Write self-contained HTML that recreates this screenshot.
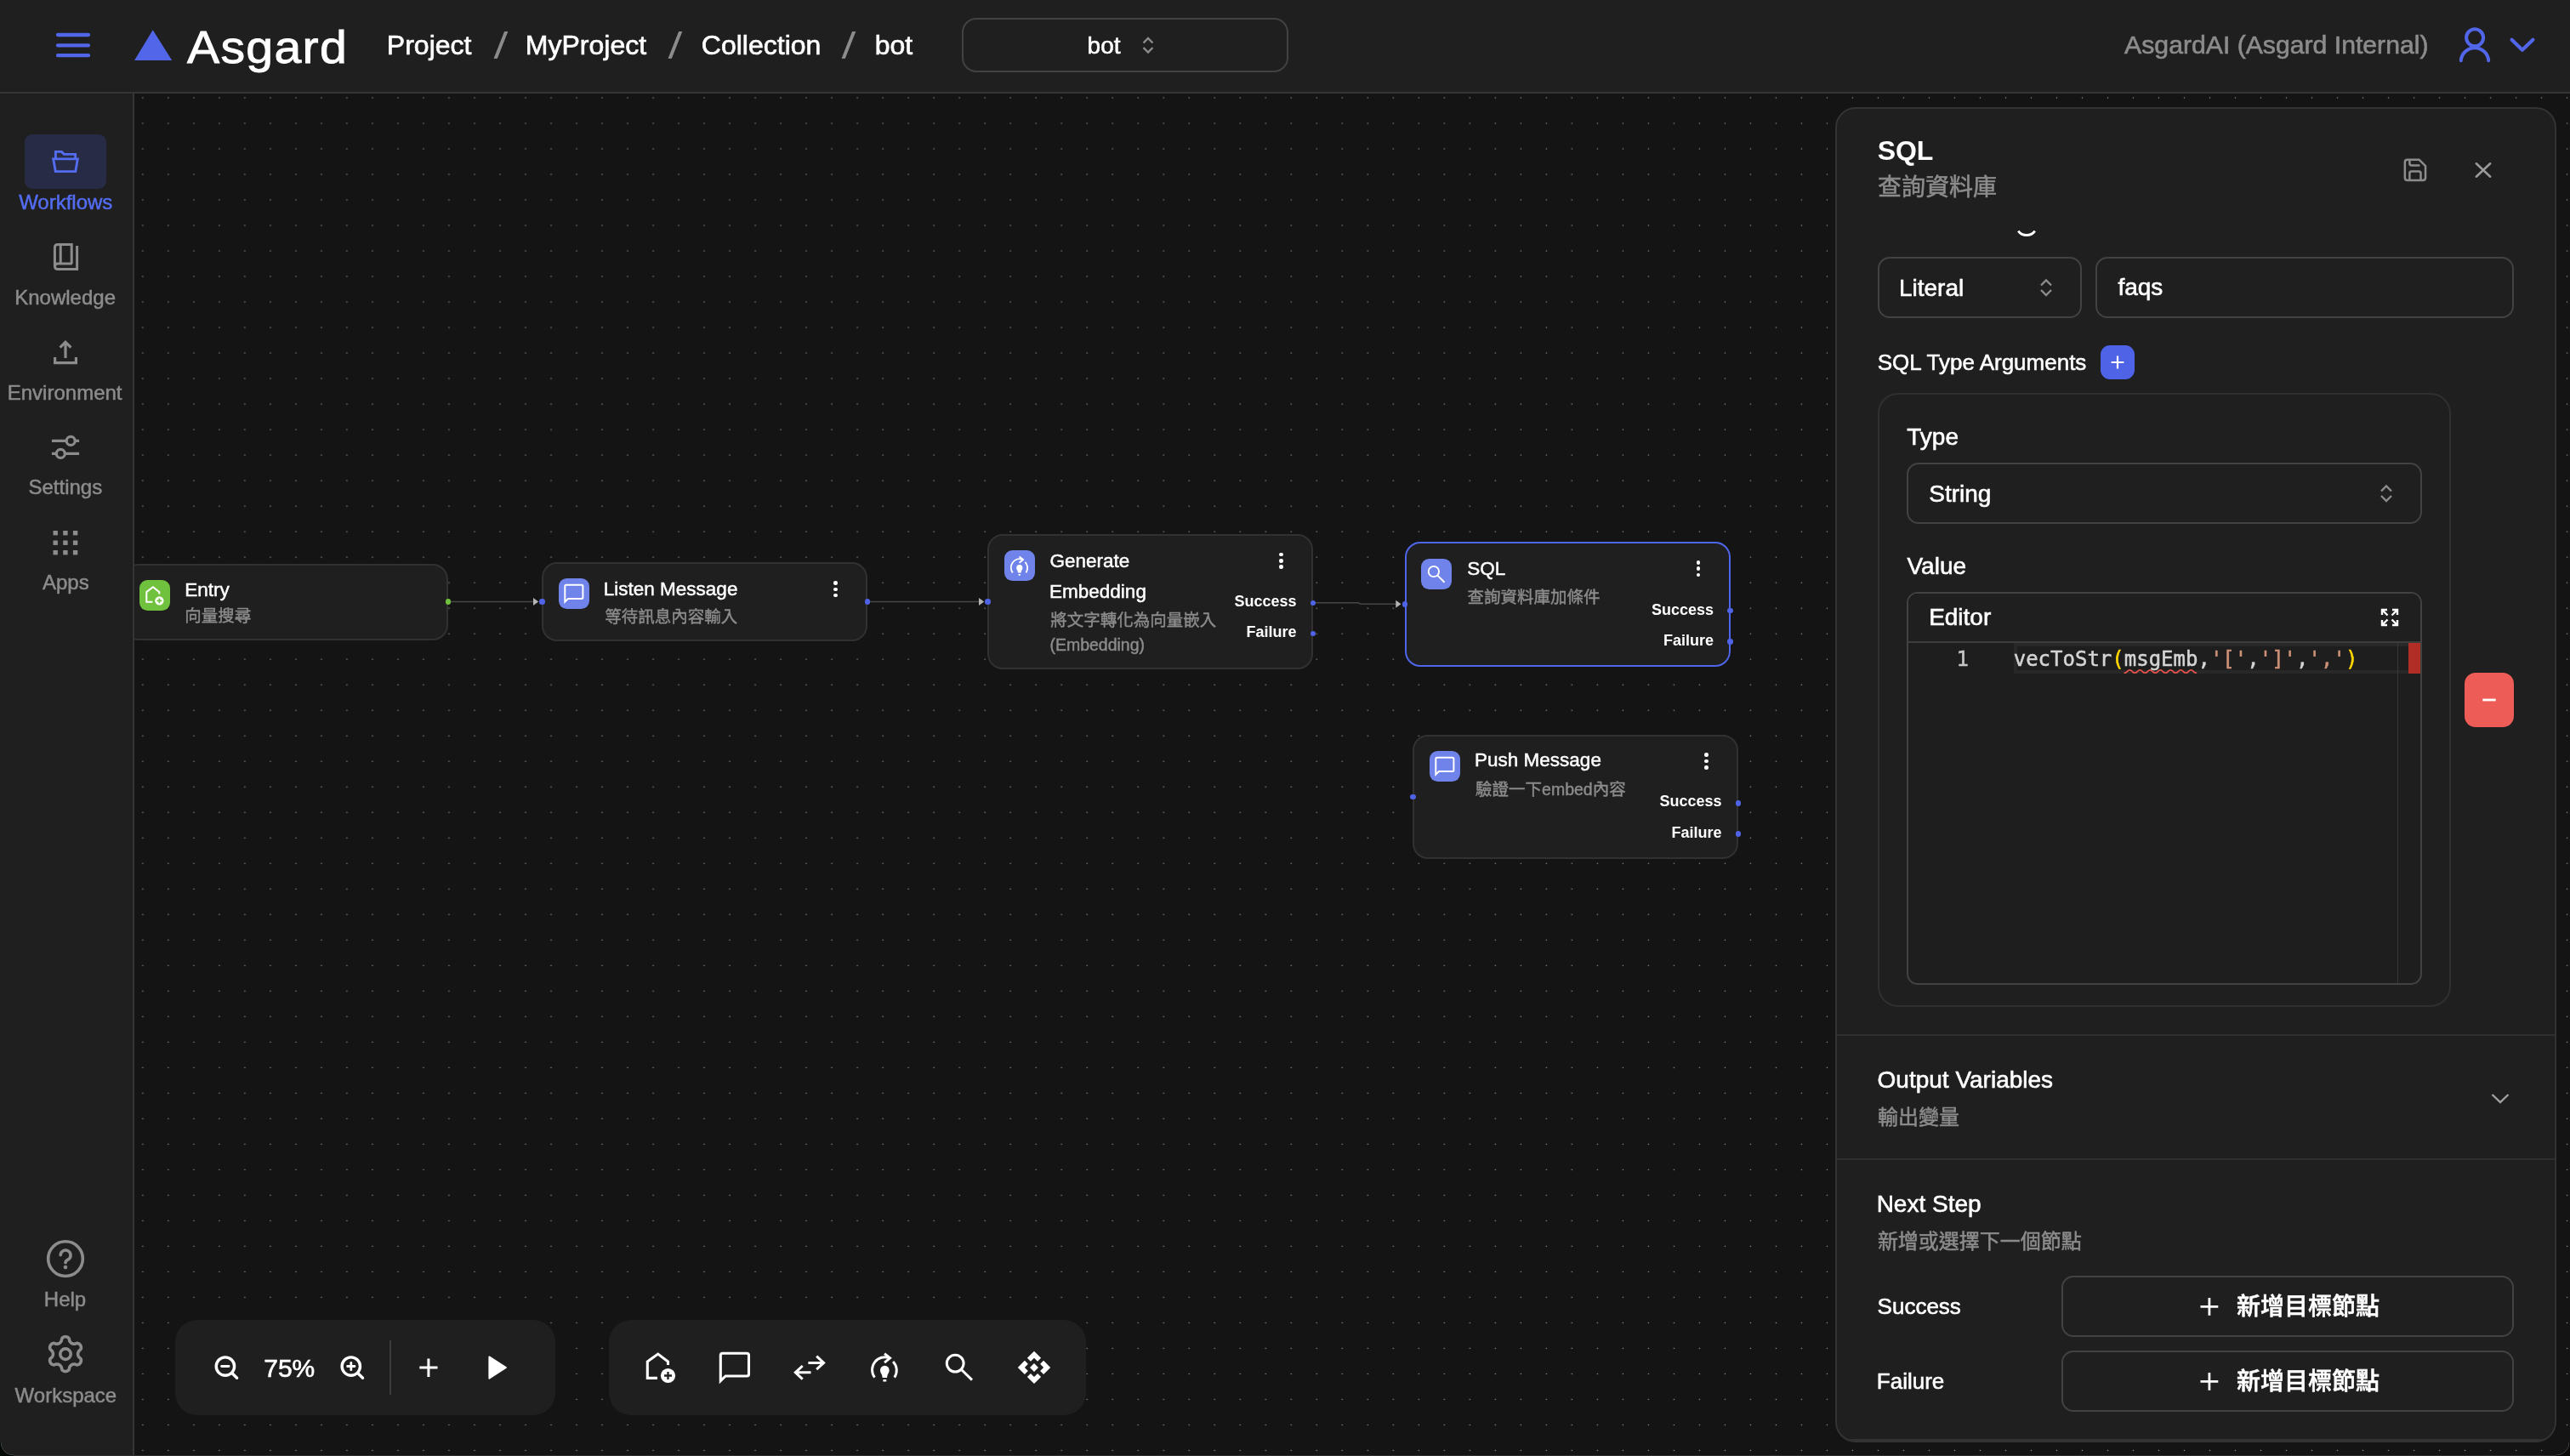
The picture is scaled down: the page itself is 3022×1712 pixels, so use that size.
<!DOCTYPE html>
<html lang="zh-Hant"><head><meta charset="utf-8"><title>Asgard</title>
<style>
html,body{margin:0;padding:0;background:#141414;}
body{width:3022px;height:1712px;overflow:hidden;position:relative;font-family:"Liberation Sans","Noto Sans CJK TC",sans-serif;}
.a{position:absolute;box-sizing:border-box;}
.t{position:absolute;white-space:pre;line-height:1.2;-webkit-text-stroke:0.021em;}
.t b{font-weight:400;}
.t b.g{color:#ffd700;}
.t b.s{color:#ce9178;}
svg{position:absolute;overflow:visible;}
.node{position:absolute;box-sizing:border-box;background:#1f1f1f;border:2px solid #313131;border-radius:18px;}
.ic{position:absolute;width:36px;height:36px;border-radius:9.5px;background:#6f83ea;}
.dot{position:absolute;width:6.5px;height:6.5px;margin:0.5px;border-radius:50%;background:#4f63e6;}
.box{position:absolute;box-sizing:border-box;border:2px solid #424242;border-radius:14px;}
.kd{position:absolute;width:4.6px;height:4.6px;border-radius:50%;background:#fff;}
@media (max-width:1600px){html{zoom:0.5;}}
</style></head>
<body>
<!-- ===== canvas ===== -->
<div class="a" id="canvas" style="left:158px;top:110px;width:2864px;height:1602px;background:#141414;"></div>
<svg style="left:158px;top:110px" width="2864" height="1602" viewBox="0 0 2864 1602"><defs><pattern id="dots" x="-5.12" y="-10" width="30.008" height="30.008" patternUnits="userSpaceOnUse"><circle cx="15.004" cy="15.004" r="0.78" fill="#91919a"/></pattern></defs><rect x="0" y="0" width="2864" height="1602" fill="url(#dots)"/></svg>

<!-- edges -->
<svg style="left:0;top:0" width="3022" height="1712" viewBox="0 0 3022 1712">
  <g fill="none" stroke="#464646" stroke-width="1.5">
    <path d="M530 707.5H628"/>
    <path d="M1023 707.5H1152"/>
    <path d="M1547 708.75H1596Q1598 708.75 1598.5 709.5Q1599 710.25 1601 710.25H1642"/>
  </g>
  <g fill="#b4b4b4">
    <path d="M627 703L633.2 707.5L627 712Z"/>
    <path d="M1151 703L1157.2 707.5L1151 712Z"/>
    <path d="M1641.3 705.75L1647.5 710.25L1641.3 714.75Z"/>
  </g>
</svg>

<!-- Entry node -->
<div class="node" style="left:145px;top:663px;width:382px;height:89.5px;"></div>
<div class="ic" style="left:163.7px;top:682.1px;background:#70c23e;">
  <svg width="36" height="36" viewBox="0 0 36 36"><path d="M15.4 25.8H8.3V14.1L15.9 8.3L23.3 14.1V16.6" fill="none" stroke="#fff" stroke-width="2"/><circle cx="23.4" cy="24.3" r="5.15" fill="#fff"/><path d="M20.5 24.3H26.3M23.4 21.4V27.2" stroke="#70c23e" stroke-width="1.7" fill="none"/></svg>
</div>
<div class="dot" style="left:523.25px;top:703.75px;background:#70c23e;"></div>

<!-- Listen Message node -->
<div class="node" style="left:637px;top:661px;width:383px;height:93px;"></div>
<div class="ic" style="left:657px;top:680px;">
  <svg width="36" height="36" viewBox="0 0 36 36"><path d="M8.8 7.8H26.9Q28.4 7.8 28.4 9.3V22.6Q28.4 24.1 26.9 24.1H11L7.3 27.7V9.3Q7.3 7.8 8.8 7.8Z" fill="none" stroke="#fff" stroke-width="2" stroke-linejoin="miter"/></svg>
</div>
<div class="kd" style="left:980.2px;top:683.45px"></div><div class="kd" style="left:980.2px;top:690.7px"></div><div class="kd" style="left:980.2px;top:697.7px"></div>
<div class="dot" style="left:633.75px;top:703.75px;"></div>
<div class="dot" style="left:1016.25px;top:703.75px;"></div>

<!-- Generate Embedding node -->
<div class="node" style="left:1161px;top:628px;width:383px;height:159px;"></div>
<div class="ic" style="left:1180.8px;top:647.1px;">
  <svg width="36" height="36" viewBox="0 0 36 36"><g fill="none" stroke="#fff" stroke-width="1.9"><path d="M9.8 26.4A10.1 10.1 0 0 1 21.6 11"/><path d="M17.6 7.6L22 11.1L17.6 14.7"/><path d="M24.4 13.8A10.1 10.1 0 0 1 25.5 26.4"/></g><path d="M17.8 17.1a3.6 3.6 0 0 1 3.6 3.6c0 1.7-.9 2.5-1.4 3.7L19.6 26.6H16L15.6 24.4c-.5-1.2-1.4-2-1.4-3.7a3.6 3.6 0 0 1 3.6-3.6Z" fill="#fff"/><rect x="16.6" y="28" width="2.4" height="1.7" fill="#fff"/></svg>
</div>
<div class="kd" style="left:1503.95px;top:649.7px"></div><div class="kd" style="left:1503.95px;top:657.2px"></div><div class="kd" style="left:1503.95px;top:664.45px"></div>
<div class="dot" style="left:1157.5px;top:703.75px;"></div>
<div class="dot" style="left:1540px;top:705px;"></div>
<div class="dot" style="left:1540px;top:741.25px;"></div>

<!-- SQL node -->
<div class="node" style="left:1652px;top:637px;width:382.5px;height:147px;border:2px solid #4f66ea;"></div>
<div class="ic" style="left:1671.3px;top:656.5px;">
  <svg width="36" height="36" viewBox="0 0 36 36"><circle cx="14.9" cy="15" r="6.15" fill="none" stroke="#fff" stroke-width="1.9"/><path d="M19.4 19.6L27.6 27.8" stroke="#fff" stroke-width="2" fill="none"/></svg>
</div>
<div class="kd" style="left:1994.7px;top:658.95px"></div><div class="kd" style="left:1994.7px;top:666.45px"></div><div class="kd" style="left:1994.7px;top:673.7px"></div>
<div class="dot" style="left:1648.25px;top:706.5px;"></div>
<div class="dot" style="left:2030.5px;top:714.25px;"></div>
<div class="dot" style="left:2030.5px;top:750.5px;"></div>

<!-- Push Message node -->
<div class="node" style="left:1661px;top:863.5px;width:383px;height:146.5px;"></div>
<div class="ic" style="left:1680.75px;top:882.5px;">
  <svg width="36" height="36" viewBox="0 0 36 36"><path d="M8.8 7.8H26.9Q28.4 7.8 28.4 9.3V22.6Q28.4 24.1 26.9 24.1H11L7.3 27.7V9.3Q7.3 7.8 8.8 7.8Z" fill="none" stroke="#fff" stroke-width="2" stroke-linejoin="miter"/></svg>
</div>
<div class="kd" style="left:2003.95px;top:885.2px"></div><div class="kd" style="left:2003.95px;top:892.7px"></div><div class="kd" style="left:2003.95px;top:900.2px"></div>
<div class="dot" style="left:1657.5px;top:933px;"></div>
<div class="dot" style="left:2040px;top:940.5px;"></div>
<div class="dot" style="left:2040px;top:976.75px;"></div>

<!-- toolbars -->
<div class="a" style="left:206px;top:1552px;width:446.5px;height:112px;background:#1f1f1f;border-radius:26px;"></div>
<div class="a" style="left:716px;top:1552px;width:561px;height:112px;background:#1f1f1f;border-radius:26px;"></div>
<div class="a" style="left:457.8px;top:1576px;width:2px;height:64px;background:#3c3c3c;"></div>
<svg style="left:0;top:0" width="3022" height="1712" viewBox="0 0 3022 1712" fill="none" stroke="#fff" stroke-width="3">
  <!-- zoom out -->
  <g stroke-width="3.4" stroke-linecap="round"><circle cx="264.9" cy="1606.6" r="10.7"/><path d="M272.8 1614.5L278.6 1620.2"/><path d="M260.6 1606.5H269" stroke-width="2.8"/></g>
  <!-- zoom in -->
  <g stroke-width="3.4" stroke-linecap="round"><circle cx="412.8" cy="1606.6" r="10.7"/><path d="M420.7 1614.5L426.5 1620.2"/><path d="M408.6 1606.5H417M412.8 1602.3V1610.7" stroke-width="2.8"/></g>
  <!-- plus -->
  <path d="M493.3 1608.1H514.5M503.9 1597.4V1618.9"/>
  <!-- play -->
  <path d="M575.3 1595.3L595 1608L575.3 1620.7Z" fill="#fff" stroke="#fff" stroke-width="1.8" stroke-linejoin="round"/>
  <!-- home plus -->
  <path d="M772.9 1620.4H761.3V1601L773.7 1592.1L785.5 1601V1604.9" stroke-width="3.1"/>
  <circle cx="785.5" cy="1617.5" r="8.6" fill="#fff" stroke="none"/><path d="M781 1617.5H790M785.5 1613V1622" stroke="#1f1f1f" stroke-width="2.3"/>
  <!-- chat -->
  <path d="M849.6 1591.3H878.2Q880.5 1591.3 880.5 1593.6V1615.7Q880.5 1618 878.2 1618H853.2L847.3 1623.7V1593.6Q847.3 1591.3 849.6 1591.3Z" stroke-width="3.1"/>
  <!-- swap -->
  <path d="M950.4 1602.4H968.6M960.2 1594.6L968.6 1602.4L960.2 1610.2"/>
  <path d="M953.5 1613.8H935.3M943.7 1606L935.3 1613.8L943.7 1621.6"/>
  <!-- bulb rotate -->
  <g transform="translate(1013.9 1580.4) scale(1.485)"><g fill="none" stroke="#fff" stroke-width="1.95"><path d="M9.8 26.4A10.1 10.1 0 0 1 21.6 11"/><path d="M17.6 7.6L22 11.1L17.6 14.7"/><path d="M24.4 13.8A10.1 10.1 0 0 1 25.5 26.4"/></g><path d="M17.8 17.1a3.6 3.6 0 0 1 3.6 3.6c0 1.7-.9 2.5-1.4 3.7L19.6 26.6H16L15.6 24.4c-.5-1.2-1.4-2-1.4-3.7a3.6 3.6 0 0 1 3.6-3.6Z" fill="#fff" stroke="none"/><rect x="16.5" y="28" width="2.6" height="1.7" fill="#fff" stroke="none"/></g>
  <!-- search -->
  <circle cx="1123.2" cy="1603.1" r="9.9"/><path d="M1130.3 1610.2L1143 1622.6"/>
  <!-- diamond -->
  <g fill="#fff" stroke="none"><path d="M1216.00 1588.70L1224.10 1596.80L1220.05 1600.80L1216.00 1596.80L1211.95 1600.80L1207.90 1596.80Z"/><path d="M1216.00 1627.10L1224.10 1619.00L1220.05 1615.00L1216.00 1619.00L1211.95 1615.00L1207.90 1619.00Z"/><path d="M1196.80 1607.90L1204.90 1616.00L1208.90 1611.95L1204.90 1607.90L1208.90 1603.85L1204.90 1599.80Z"/><path d="M1235.20 1607.90L1227.10 1616.00L1223.10 1611.95L1227.10 1607.90L1223.10 1603.85L1227.10 1599.80Z"/><path d="M1216.00 1602.90L1221.00 1607.90L1216.00 1612.90L1211.00 1607.90Z"/></g>
</svg>

<!-- ===== right panel ===== -->
<div class="a" style="left:2158px;top:126px;width:848px;height:1570px;background:#1f1f1f;border:2px solid #333;border-radius:24px;overflow:hidden;"><div class="a" style="left:0;bottom:0;width:844px;height:2px;background:#333;"></div></div>
<div class="a" style="left:2160px;top:1216px;width:844px;height:2px;background:#303030;"></div>
<div class="a" style="left:2160px;top:1362px;width:844px;height:2px;background:#303030;"></div>
<div class="box" style="left:2208px;top:302px;width:240px;height:72px;"></div>
<div class="box" style="left:2464px;top:302px;width:492px;height:72px;"></div>
<div class="a" style="left:2470px;top:406px;width:40px;height:40px;border-radius:11px;background:#4f63e6;"></div>
<div class="a" style="left:2208px;top:462px;width:674px;height:722px;border:2px solid #303030;border-radius:24px;"></div>
<div class="box" style="left:2242px;top:544px;width:606px;height:72px;"></div>
<div class="box" style="left:2242px;top:696px;width:606px;height:462px;border-radius:13px;background:#1e1e1e;overflow:hidden;">
  <div class="a" style="left:0;top:0;width:602px;height:56px;background:#1f1f1f;"></div>
  <div class="a" style="left:0;top:56px;width:602px;height:2px;background:#3c3c3c;"></div>
  <div class="a" style="left:124px;top:58px;width:470px;height:36px;border:4px solid #282828;"></div>
  <div class="a" style="left:575.2px;top:58px;width:1.3px;height:402px;background:#383838;"></div>
  <div class="a" style="left:588px;top:58px;width:14px;height:36px;background:#b02e26;"></div>
</div>
<div class="a" style="left:2898px;top:791px;width:58px;height:64px;border-radius:13px;background:#ee5c58;"></div>
<div class="box" style="left:2424px;top:1500px;width:532px;height:72px;"></div>
<div class="box" style="left:2424px;top:1588px;width:532px;height:72px;"></div>
<svg style="left:0;top:0" width="3022" height="1712" viewBox="0 0 3022 1712" fill="none">
  <!-- save -->
  <g stroke="#8c8c8c" stroke-width="2.5" stroke-linejoin="round" stroke-linecap="round">
  <path d="M2830.8 187.85H2844.7L2852.05 195.2V209.1Q2852.05 212.05 2849.1 212.05H2830.8Q2827.85 212.05 2827.85 209.1V190.8Q2827.85 187.85 2830.8 187.85Z"/><path d="M2833.4 211.8V203.6Q2833.4 201.4 2835.6 201.4H2844.3Q2846.5 201.4 2846.5 203.6V211.8"/><path d="M2833.4 188.2V192.3Q2833.4 194.5 2835.6 194.5H2844.4"/></g>
  <!-- close -->
  <path d="M2911.8 192.3L2928.2 207.7M2928.2 192.3L2911.8 207.7" stroke="#9a9a9a" stroke-width="2.6" stroke-linecap="round"/>
  <!-- clipped circle arc -->
  <path d="M2373.2 271.6A12.2 12.2 0 0 0 2392.8 271.6" stroke="#fff" stroke-width="2.9"/>
  <!-- select chevrons -->
  <g stroke="#8c8c8c" stroke-width="2.4" stroke-linejoin="miter">
    <path d="M2400 335.5L2406 329.5L2412 335.5M2400 341L2406 347L2412 341"/>
    <path d="M2800 577.5L2806 571.5L2812 577.5M2800 583L2806 589L2812 583"/>
  </g>
  <!-- plus in blue btn -->
  <path d="M2482.6 426H2497.4M2490 418.6V433.4" stroke="#fff" stroke-width="2.2"/>
  <!-- minus -->
  <path d="M2919.3 823H2934.7" stroke="#fff" stroke-width="2.8"/>
  <!-- fullscreen -->
  <g stroke="#fff" stroke-width="2.4"><path d="M2801 723V717H2807M2801.5 717.5L2807.5 723.5"/><path d="M2813 717H2819V723M2818.5 717.5L2812.5 723.5"/><path d="M2801 729V735H2807M2801.5 734.5L2807.5 728.5"/><path d="M2813 735H2819V729M2818.5 734.5L2812.5 728.5"/></g>
  <!-- squiggle -->
  <path d="M2498.3 791.2 Q2499.9 791.2 2501.3 789.55 T2504.3 787.9 Q2505.9 787.9 2507.3 789.55 T2510.3 791.2 Q2511.9 791.2 2513.3 789.55 T2516.3 787.9 Q2517.9 787.9 2519.3 789.55 T2522.3 791.2 Q2523.9 791.2 2525.3 789.55 T2528.3 787.9 Q2529.9 787.9 2531.3 789.55 T2534.3 791.2 Q2535.9 791.2 2537.3 789.55 T2540.3 787.9 Q2541.9 787.9 2543.3 789.55 T2546.3 791.2 Q2547.9 791.2 2549.3 789.55 T2552.3 787.9 Q2553.9 787.9 2555.3 789.55 T2558.3 791.2 Q2559.9 791.2 2561.3 789.55 T2564.3 787.9 Q2565.9 787.9 2567.3 789.55 T2570.3 791.2 Q2571.9 791.2 2573.3 789.55 T2576.3 787.9 Q2577.9 787.9 2579.3 789.55 T2582.3 791.2" stroke="#e5534b" stroke-width="1.8" stroke-linejoin="round" stroke-linecap="round"/>
  <!-- chevron down (output vars) -->
  <path d="M2930.5 1287L2940 1296L2949.5 1287" stroke="#a0a0a0" stroke-width="2.4"/>
  <!-- plus in buttons -->
  <path d="M2587.5 1536.4H2608.3M2597.9 1526V1546.8M2587.5 1624.4H2608.3M2597.9 1614V1634.8" stroke="#fff" stroke-width="2.8"/>
</svg>

<!-- ===== header ===== -->
<div class="a" style="left:0;top:0;width:3022px;height:110px;background:#1f1f1f;border-bottom:2px solid #353535;"></div>
<div class="box" style="left:1131px;top:21px;width:384px;height:64px;border-radius:17px;"></div>
<svg style="left:0;top:0" width="3022" height="120" viewBox="0 0 3022 120" fill="none">
  <path d="M68 41H104M68 53.4H104M68 65.2H104" stroke="#5166e8" stroke-width="4.3" stroke-linecap="round"/>
  <path d="M1344.5 50.5L1350 45L1355.5 50.5M1344.5 56L1350 61.5L1355.5 56" stroke="#8c8c8c" stroke-width="2.4"/>
  <path d="M179.7 35.2L202.2 71H158.1Z" fill="#5166e8"/>
  <g stroke="#5166e8" stroke-width="4" stroke-linecap="round"><circle cx="2910.1" cy="44.3" r="10"/><path d="M2893.8 71.2A16.25 16.25 0 0 1 2926.2 71.2"/><path d="M2953.6 46.7L2965.9 58.8L2978.4 46.7" stroke-width="4.2" stroke-linejoin="round"/></g>
</svg>

<!-- ===== sidebar ===== -->
<div class="a" style="left:0;top:110px;width:158px;height:1602px;background:#1f1f1f;border-right:2px solid #353535;"></div>
<div class="a" style="left:29px;top:158px;width:96px;height:64px;border-radius:9px;background:#272b46;"></div>
<svg style="left:0;top:0" width="160" height="1712" viewBox="0 0 160 1712" fill="none" stroke="#8c8c8c" stroke-width="2.6">
  <!-- folder open -->
  <g stroke="#536cf0" stroke-width="2.9" stroke-linejoin="miter"><path d="M65.4 186V178.4H72.4L75.4 181.4H88.6V186"/><path d="M62.7 186.9H91.3L88.8 201.6H65.3Z"/></g>
  <!-- knowledge -->
  <path d="M84.2 310.1V287.4H68Q64.4 287.4 64.4 291V313Q64.4 316.5 68 316.5H90.6V289M84.9 310.1H68Q64.4 310.1 64.4 313.4M71.2 287.4V310.1" stroke-width="3" stroke-linejoin="miter"/>
  <!-- environment (upload) -->
  <path d="M77 421V402.4M70.6 408.6L77 402.2L83.4 408.6M64.6 419.9V426.6H89.4V419.9" stroke-width="3.2"/>
  <!-- settings -->
  <g stroke-width="3.2"><path d="M60.9 518.4H78.2M88.2 518.4H93.1M60.9 533.4H66.3M76.3 533.4H93.1"/><circle cx="83.2" cy="518.4" r="5"/><circle cx="71.3" cy="533.4" r="5"/></g>
  <!-- apps -->
  <g fill="#8c8c8c" stroke="none"><rect x="62.5" y="624" width="5.4" height="5.4"/><rect x="74.2" y="624" width="5.4" height="5.4"/><rect x="85.9" y="624" width="5.4" height="5.4"/><rect x="62.5" y="635.5" width="5.4" height="5.4"/><rect x="74.2" y="635.5" width="5.4" height="5.4"/><rect x="85.9" y="635.5" width="5.4" height="5.4"/><rect x="62.5" y="647" width="5.4" height="5.4"/><rect x="74.2" y="647" width="5.4" height="5.4"/><rect x="85.9" y="647" width="5.4" height="5.4"/></g>
  <!-- help -->
  <circle cx="77" cy="1480.1" r="20.35" stroke-width="3.6"/><path d="M71.2 1475.6A5.9 5.9 0 1 1 80.6 1480.7Q77 1482.5 77 1484.7" stroke-width="3.6" stroke-linecap="round"/><circle cx="77" cy="1490.1" r="2.3" fill="#8c8c8c" stroke="none"/>
  <!-- gear -->
  <circle cx="77" cy="1592.1" r="6.25" stroke-width="3.6"/>
  <path d="M91.6 1592.1L91.6 1591.5L91.8 1590.8L92.0 1590.1L92.3 1589.4L92.7 1588.6L93.9 1587.6L95.0 1586.4L95.3 1585.4L95.4 1584.5L95.3 1583.6L95.0 1582.7L94.7 1581.9L94.2 1581.2L93.5 1580.5L92.8 1580.0L91.9 1579.6L90.9 1579.3L89.4 1579.7L87.9 1580.2L87.0 1580.2L86.2 1580.1L85.5 1580.0L84.9 1579.7L84.3 1579.5L83.8 1579.1L83.3 1578.7L82.8 1578.1L82.3 1577.5L81.8 1576.7L81.5 1575.2L81.1 1573.7L80.4 1572.9L79.6 1572.4L78.8 1572.0L77.9 1571.8L77.0 1571.7L76.1 1571.8L75.2 1572.0L74.4 1572.4L73.6 1572.9L72.9 1573.7L72.5 1575.2L72.2 1576.7L71.7 1577.5L71.2 1578.1L70.7 1578.7L70.2 1579.1L69.7 1579.5L69.1 1579.7L68.5 1580.0L67.8 1580.1L67.0 1580.2L66.1 1580.2L64.6 1579.7L63.1 1579.3L62.1 1579.6L61.2 1580.0L60.5 1580.5L59.8 1581.2L59.3 1581.9L59.0 1582.7L58.7 1583.6L58.6 1584.5L58.7 1585.4L59.0 1586.4L60.1 1587.6L61.3 1588.6L61.7 1589.4L62.0 1590.1L62.2 1590.8L62.4 1591.5L62.4 1592.1L62.4 1592.7L62.2 1593.4L62.0 1594.1L61.7 1594.8L61.3 1595.6L60.1 1596.6L59.0 1597.8L58.7 1598.8L58.6 1599.7L58.7 1600.6L59.0 1601.5L59.3 1602.3L59.8 1603.0L60.5 1603.7L61.2 1604.2L62.1 1604.6L63.1 1604.9L64.6 1604.5L66.1 1604.0L67.0 1604.0L67.8 1604.1L68.5 1604.2L69.1 1604.5L69.7 1604.7L70.2 1605.1L70.7 1605.5L71.2 1606.1L71.7 1606.7L72.2 1607.5L72.5 1609.0L72.9 1610.5L73.6 1611.3L74.4 1611.8L75.2 1612.2L76.1 1612.4L77.0 1612.5L77.9 1612.4L78.8 1612.2L79.6 1611.8L80.4 1611.3L81.1 1610.5L81.5 1609.0L81.8 1607.5L82.3 1606.7L82.8 1606.1L83.3 1605.5L83.8 1605.1L84.3 1604.7L84.9 1604.5L85.5 1604.2L86.2 1604.1L87.0 1604.0L87.9 1604.0L89.4 1604.5L90.9 1604.9L91.9 1604.6L92.8 1604.2L93.5 1603.7L94.2 1603.0L94.7 1602.3L95.0 1601.5L95.3 1600.6L95.4 1599.7L95.3 1598.8L95.0 1597.8L93.9 1596.6L92.7 1595.6L92.3 1594.8L92.0 1594.1L91.8 1593.4L91.6 1592.7Z" stroke-width="3.6" stroke-linejoin="round"/>
</svg>

<div class="a" style="left:0;top:1711px;width:3022px;height:1px;background:#303030;"></div>
<div class="a" style="left:3006px;top:1696px;width:16px;height:16px;background:radial-gradient(circle at 0 0,rgba(12,10,9,0) 14.2px,#4a4a4a 14.8px,#0c0a09 15.6px);"></div>
<div class="a" style="left:0;top:1696px;width:16px;height:16px;background:radial-gradient(circle at 16px 0,rgba(3,10,5,0) 14.2px,#4a4a4a 14.8px,#030a05 15.6px);"></div>
<div id="tx" style="position:absolute;left:0;top:0;width:3022px;height:1712px;will-change:transform;">
<span class="t" style="left:219.61px;top:22.60px;font-size:54px;color:#fff;letter-spacing:1.2px;-webkit-text-stroke:0.9px #fff;transform:scaleX(1.06);transform-origin:0 0;">Asgard</span>
<span class="t" style="left:454.85px;top:33.60px;font-size:32px;color:#fff;">Project</span>
<span class="t" style="left:582.71px;top:28.80px;font-size:42px;color:#8c8c8c;transform:skewX(-7deg);">/</span>
<span class="t" style="left:617.85px;top:33.60px;font-size:32px;color:#fff;">MyProject</span>
<span class="t" style="left:788.41px;top:28.80px;font-size:42px;color:#8c8c8c;transform:skewX(-7deg);">/</span>
<span class="t" style="left:824.85px;top:33.60px;font-size:32px;color:#fff;">Collection</span>
<span class="t" style="left:992.41px;top:28.80px;font-size:42px;color:#8c8c8c;transform:skewX(-7deg);">/</span>
<span class="t" style="left:1028.77px;top:33.60px;font-size:32px;color:#fff;">bot</span>
<span class="t" style="left:1278.62px;top:36.50px;font-size:28px;color:#fff;">bot</span>
<span class="t" style="left:2498.11px;top:35.30px;font-size:30.2px;color:#8c8c8c;">AsgardAI (Asgard Internal)</span>
<span class="t" style="left:22.14px;top:224.00px;font-size:24px;color:#536cf0;">Workflows</span>
<span class="t" style="left:17.22px;top:335.50px;font-size:24px;color:#8c8c8c;">Knowledge</span>
<span class="t" style="left:8.78px;top:447.50px;font-size:24px;color:#8c8c8c;">Environment</span>
<span class="t" style="left:33.46px;top:559.25px;font-size:24px;color:#8c8c8c;">Settings</span>
<span class="t" style="left:50.00px;top:671.00px;font-size:24px;color:#8c8c8c;">Apps</span>
<span class="t" style="left:51.83px;top:1514.00px;font-size:24px;color:#8c8c8c;">Help</span>
<span class="t" style="left:17.58px;top:1627.00px;font-size:24px;color:#8c8c8c;">Workspace</span>
<span class="t" style="left:217.32px;top:679.50px;font-size:22.5px;color:#fff;">Entry</span>
<span class="t" style="left:217.17px;top:713.30px;font-size:19.5px;color:#8c8c8c;">向量搜尋</span>
<span class="t" style="left:709.82px;top:679.00px;font-size:22.5px;color:#fff;">Listen Message</span>
<span class="t" style="left:711.25px;top:714.00px;font-size:19.5px;color:#8c8c8c;">等待訊息內容輸入</span>
<span class="t" style="left:1234.54px;top:645.75px;font-size:22.5px;color:#fff;">Generate</span>
<span class="t" style="left:1234.07px;top:681.50px;font-size:22.5px;color:#fff;">Embedding</span>
<span class="t" style="left:1235.13px;top:717.75px;font-size:19.5px;color:#8c8c8c;">將文字轉化為向量嵌入</span>
<span class="t" style="left:1234.41px;top:747.00px;font-size:19.5px;color:#8c8c8c;">(Embedding)</span>
<span class="t" style="left:1451.50px;top:697.00px;font-size:18px;color:#fff;font-weight:700;-webkit-text-stroke:0;">Success</span>
<span class="t" style="left:1465.42px;top:733.25px;font-size:18px;color:#fff;font-weight:700;-webkit-text-stroke:0;">Failure</span>
<span class="t" style="left:1725.33px;top:654.50px;font-size:22.5px;color:#fff;">SQL</span>
<span class="t" style="left:1725.38px;top:690.75px;font-size:19.5px;color:#8c8c8c;">查詢資料庫加條件</span>
<span class="t" style="left:1942.00px;top:706.50px;font-size:18px;color:#fff;font-weight:700;-webkit-text-stroke:0;">Success</span>
<span class="t" style="left:1955.92px;top:742.75px;font-size:18px;color:#fff;font-weight:700;-webkit-text-stroke:0;">Failure</span>
<span class="t" style="left:1734.07px;top:880.25px;font-size:22.5px;color:#fff;">Push Message</span>
<span class="t" style="left:1735.06px;top:916.61px;font-size:19.5px;color:#8c8c8c;">驗證一下embed內容</span>
<span class="t" style="left:1951.50px;top:932.00px;font-size:18px;color:#fff;font-weight:700;-webkit-text-stroke:0;">Success</span>
<span class="t" style="left:1965.42px;top:968.50px;font-size:18px;color:#fff;font-weight:700;-webkit-text-stroke:0;">Failure</span>
<span class="t" style="left:310.25px;top:1591.25px;font-size:30px;color:#fff;-webkit-text-stroke:0.6px #fff;">75%</span>
<span class="t" style="left:2207.64px;top:157.50px;font-size:32px;color:#fff;font-weight:700;-webkit-text-stroke:0;">SQL</span>
<span class="t" style="left:2207.89px;top:204.49px;font-size:28px;color:#8c8c8c;">查詢資料庫</span>
<span class="t" style="left:2232.93px;top:321.50px;font-size:28px;color:#fff;">Literal</span>
<span class="t" style="left:2490.40px;top:320.50px;font-size:28px;color:#fff;">faqs</span>
<span class="t" style="left:2207.67px;top:411.00px;font-size:26px;color:#fff;">SQL Type Arguments</span>
<span class="t" style="left:2242.31px;top:497.00px;font-size:28px;color:#fff;">Type</span>
<span class="t" style="left:2268.23px;top:563.50px;font-size:28px;color:#fff;">String</span>
<span class="t" style="left:2242.52px;top:649.00px;font-size:28px;color:#fff;">Value</span>
<span class="t" style="left:2268.13px;top:709.00px;font-size:28px;color:#fff;">Editor</span>
<span class="t" style="left:2300.51px;top:760.70px;font-size:24px;color:#c6c6c6;font-family:'DejaVu Sans Mono','Liberation Mono',monospace;">1</span>
<span class="t" style="left:2367.71px;top:760.60px;font-size:24px;color:#d4d4d4;font-family:'DejaVu Sans Mono','Liberation Mono',monospace;">vecToStr<b class="g">(</b>msgEmb,<b class="s">'['</b>,<b class="s">']'</b>,<b class="s">','</b><b class="g">)</b></span>
<span class="t" style="left:2207.58px;top:1252.60px;font-size:28px;color:#fff;">Output Variables</span>
<span class="t" style="left:2207.97px;top:1300.42px;font-size:24px;color:#8c8c8c;">輸出變量</span>
<span class="t" style="left:2206.63px;top:1398.80px;font-size:28px;color:#fff;">Next Step</span>
<span class="t" style="left:2207.88px;top:1446.38px;font-size:24px;color:#8c8c8c;">新增或選擇下一個節點</span>
<span class="t" style="left:2207.62px;top:1521.40px;font-size:26px;color:#fff;">Success</span>
<span class="t" style="left:2206.84px;top:1609.00px;font-size:26px;color:#fff;">Failure</span>
<span class="t" style="left:2629.88px;top:1520.01px;font-size:28px;color:#fff;font-weight:500;">新增目標節點</span>
<span class="t" style="left:2629.88px;top:1608.01px;font-size:28px;color:#fff;font-weight:500;">新增目標節點</span>
</div>

</body></html>
